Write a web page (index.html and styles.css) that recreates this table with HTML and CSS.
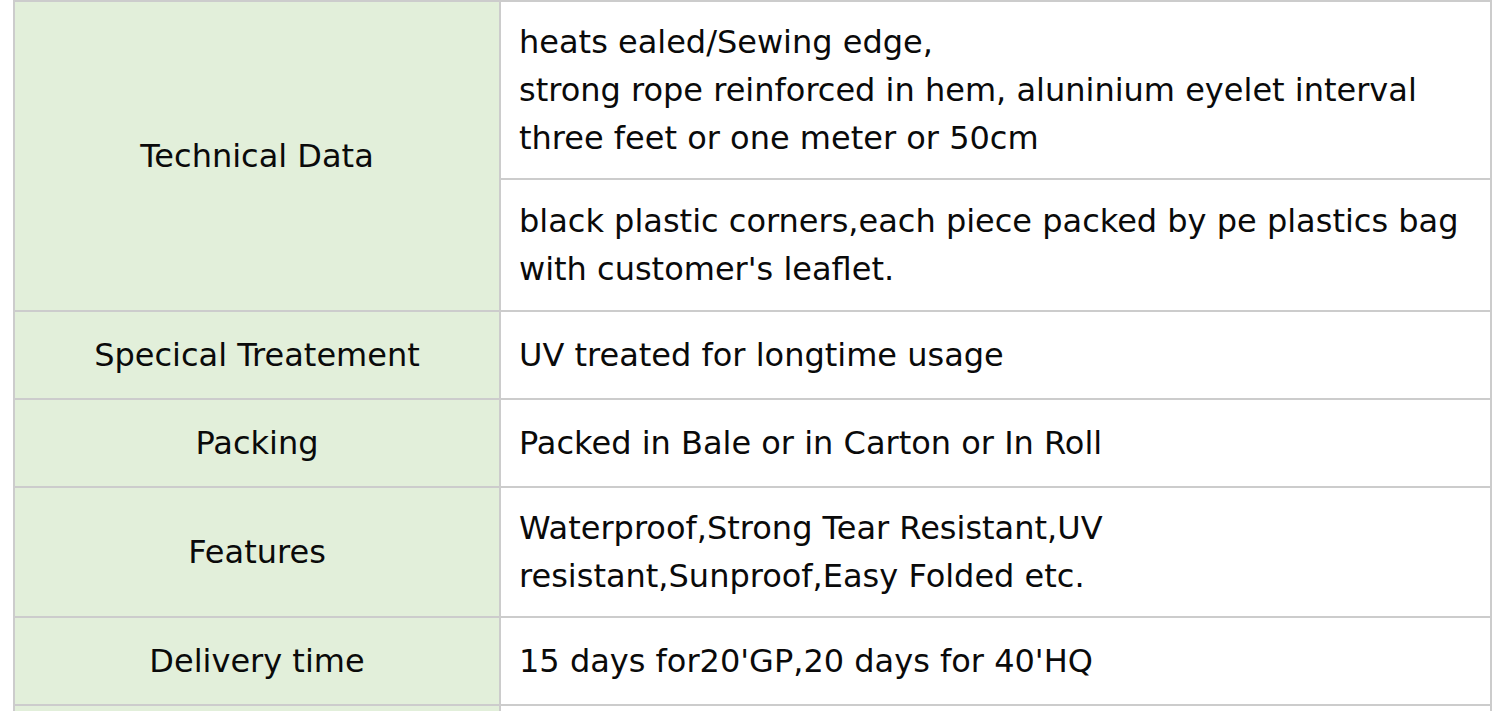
FILE: index.html
```html
<!DOCTYPE html>
<html>
<head>
<meta charset="utf-8">
<link rel="stylesheet" href="styles.css">
</head>
<body>
<div class="wrap">
<table class="spec">
  <tr>
    <td class="label" rowspan="2">Technical Data</td>
    <td class="value">heats ealed/Sewing edge,<br>strong rope reinforced in hem, aluninium eyelet interval<br>three feet or one meter or 50cm</td>
  </tr>
  <tr>
    <td class="value pad-b">black plastic corners,each piece packed by pe plastics bag<br>with customer's leaflet.</td>
  </tr>
  <tr>
    <td class="label">Specical Treatement</td>
    <td class="value single">UV treated for longtime usage</td>
  </tr>
  <tr>
    <td class="label">Packing</td>
    <td class="value single">Packed in Bale or in Carton or In Roll</td>
  </tr>
  <tr>
    <td class="label">Features</td>
    <td class="value">Waterproof,Strong Tear Resistant,UV<br>resistant,Sunproof,Easy Folded etc.</td>
  </tr>
  <tr>
    <td class="label">Delivery time</td>
    <td class="value single">15 days for20'GP,20 days for 40'HQ</td>
  </tr>
  <tr>
    <td class="label">&nbsp;</td>
    <td class="value single">&nbsp;</td>
  </tr>
</table>
</div>
</body>
</html>
```
FILE: styles.css
```css
html, body {
  margin: 0;
  padding: 0;
  background: #ffffff;
  overflow: hidden;
}
.wrap {
  padding-left: 13px;
}
.spec {
  border-collapse: collapse;
  width: 1479px;
  font-family: "DejaVu Sans", Verdana, sans-serif;
  font-size: 32px;
  line-height: 48px;
  color: #0a0a0a;
  table-layout: fixed;
}
.spec td {
  border: 2px solid #cccccc;
  vertical-align: middle;
  white-space: nowrap;
}
.label {
  width: 464px;
  background: #e2efda;
  text-align: center;
  padding: 0 10px;
}
.value {
  background: #ffffff;
  text-align: left;
  padding: 16px 18px;
}
.pad-b {
  padding: 17px 18px;
}
.single {
  padding: 19px 18px;
}
```
